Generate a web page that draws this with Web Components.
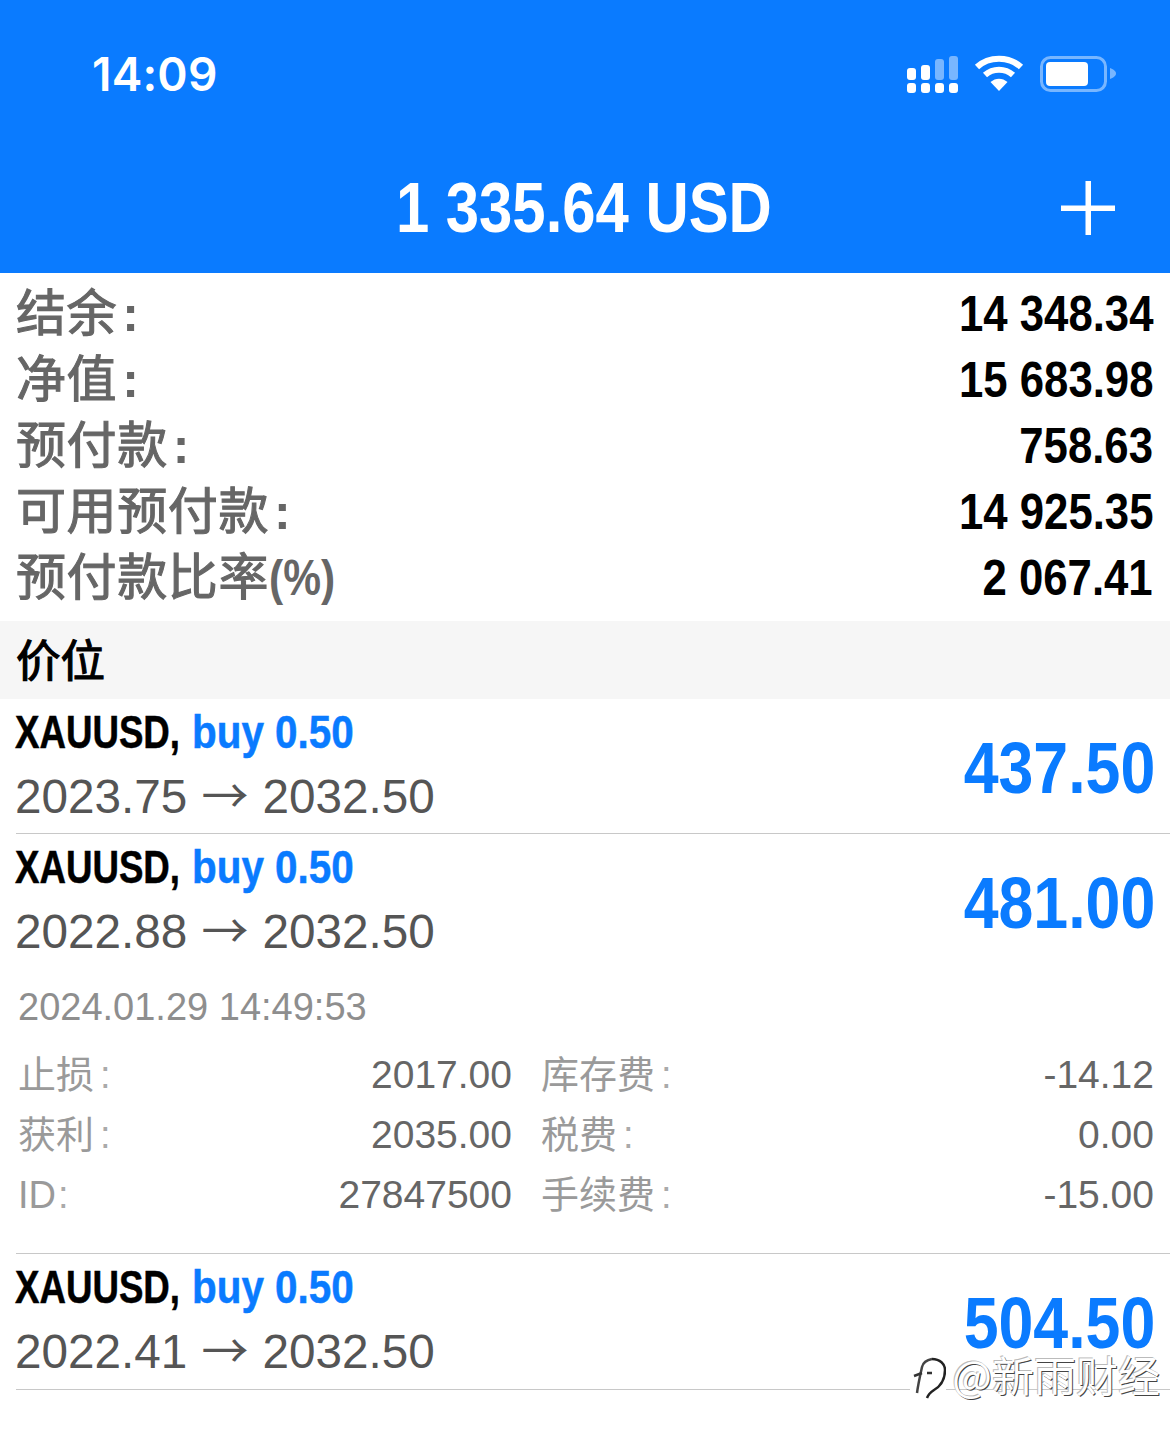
<!DOCTYPE html>
<html lang="zh"><head><meta charset="utf-8"><title>Positions</title>
<style>
html,body{margin:0;background:#fff;width:1170px;height:1439px;overflow:hidden;font-family:"Liberation Sans","Noto Sans CJK SC",sans-serif}
</style></head><body>
<trade-screen>
  <status-bar slot="status" time="14:09"></status-bar>
  <app-header slot="header">1 335.64 USD</app-header>
  <balance-row label="结余" tail=":" value="14 348.34"></balance-row>
  <balance-row label="净值" tail=":" value="15 683.98"></balance-row>
  <balance-row label="预付款" tail=":" value="758.63"></balance-row>
  <balance-row label="可用预付款" tail=":" value="14 925.35"></balance-row>
  <balance-row label="预付款比率" tail="(%)" value="2 067.41"></balance-row>
  <section-head>价位</section-head>
  <position-row open="2023.75" close="2032.50" profit="437.50"></position-row>
  <position-row open="2022.88" close="2032.50" profit="481.00">
    <position-detail></position-detail>
  </position-row>
  <position-row open="2022.41" close="2032.50" profit="504.50"></position-row>
  <water-mark></water-mark>
</trade-screen>
<script>
const SANS='"Liberation Sans","Noto Sans CJK SC",sans-serif';
const CJK='"Noto Sans CJK SC",sans-serif';
function def(name,render){
  customElements.define(name,class extends HTMLElement{
    connectedCallback(){
      if(this.shadowRoot)return;
      this.attachShadow({mode:'open'}).innerHTML=render(this);
    }
  });
}
def('trade-screen',()=>`<style>:host{display:flex;flex-direction:column;position:relative;width:1170px;height:1439px;overflow:hidden;background:#fff}
.top{display:flex;flex-direction:column;background:#0a7bff}</style>
<div class="top"><slot name="status"></slot><slot name="header"></slot></div>
<slot></slot>`);
def('status-bar',el=>`<style>:host{display:flex;align-items:center;justify-content:space-between;height:135px;box-sizing:border-box;padding:12px 53px 0 92px;color:#fff}
.t{font:600 46px Inter,"Liberation Sans",sans-serif;letter-spacing:.2px}
svg{display:block;margin-bottom:1px}</style>
<span class="t">${el.getAttribute('time')}</span>
<svg width="210" height="40" viewBox="0 0 210 40" fill="#fff">
 <g>
  <rect x="0" y="15" width="9" height="12" rx="3"/><rect x="14" y="12" width="9" height="15" rx="3"/>
  <rect x="28" y="6" width="9" height="21" rx="3" opacity=".45"/><rect x="42" y="3" width="9" height="24" rx="3" opacity=".45"/>
  <rect x="0" y="30" width="9" height="10" rx="3"/><rect x="14" y="30" width="9" height="10" rx="3"/><rect x="28" y="30" width="9" height="10" rx="3"/><rect x="42" y="30" width="9" height="10" rx="3"/>
 </g>
 <g fill="none" stroke="#fff" stroke-width="6.200">
  <path d="M70 14C82 3 102 3 114 14"/><path d="M78 22C86 15 98 15 106 22"/>
 </g>
 <path d="M92 38L83.500 29C88.500 24.500 95.500 24.500 100.500 29Z"/>
 <rect x="134.500" y="4.500" width="64" height="33" rx="9" fill="none" stroke="#fff" stroke-opacity=".45" stroke-width="3"/>
 <rect x="139" y="9" width="42" height="24" rx="4"/>
 <path d="M203 15c3 1 6 3 6 5.500s-3 4.500-6 5.500z" opacity=".45"/>
</svg>`);
def('app-header',()=>`<style>:host{display:flex;align-items:center;justify-content:center;position:relative;height:138px;box-sizing:border-box;padding:8px 2px 0 0;color:#fff}
.v{display:inline-block;font:700 70px ${SANS};transform:scaleX(.855);white-space:pre}
svg{position:absolute;right:55px;top:46px}</style>
<span class="v"><slot></slot></span>
<svg width="54" height="54" viewBox="0 0 54 54" fill="#fff"><rect x="0" y="24.500" width="54" height="5.500"/><rect x="24.500" y="0" width="5.500" height="54"/></svg>`);
def('balance-row',el=>{const t=el.getAttribute('tail');return `<style>:host{display:flex;align-items:center;justify-content:space-between;height:66px;padding:0 16px;box-sizing:border-box}
:host(:first-of-type){margin-top:8px}
.l{font:400 50px/66px ${CJK};letter-spacing:.6px;color:#666;-webkit-text-stroke:1.100px #666;margin-bottom:5px;white-space:pre}
.t{display:inline-block;font:700 50px/66px "Liberation Sans",sans-serif;letter-spacing:0;-webkit-text-stroke:0;transform-origin:left;${t===':'?'margin-left:5px':'transform:scaleX(.85)'}}
.v{display:inline-block;font:700 50px/66px ${SANS};color:#000;transform:scaleX(.874);transform-origin:right;white-space:pre;margin-right:1px}</style>
<span class="l">${el.getAttribute('label')}<span class="t">${t}</span></span><span class="v">${el.getAttribute('value')}</span>`});
def('section-head',()=>`<style>:host{display:flex;align-items:center;height:78px;padding:0 16px;background:#f6f6f6;color:#000;box-sizing:border-box;margin-top:10px}
span{font:400 44.500px ${CJK};-webkit-text-stroke:1.200px #000;margin-bottom:6px}</style><span><slot></slot></span>`);
def('position-row',el=>`<style>:host{display:block;margin-left:16px;border-bottom:1px solid #c8c8c8}
:host(:last-of-type){padding-bottom:1px}
.m{display:flex;justify-content:space-between;align-items:center;height:134px;padding-right:15px}
.n{display:flex;font:700 47px/60px ${SANS};color:#000;white-space:pre;margin:-2px 0 2px -1px;width:420px;-webkit-text-stroke:.5px currentColor}
.n span,.n b{display:block;transform-origin:left}
.n span{width:177px;transform:scaleX(.78)}
.n b{color:#0a7bff;transform:scaleX(.86)}
.p{font:400 47.700px/60px "Liberation Sans",sans-serif;color:#555;white-space:pre;margin:-1px 0 1px -1px}
.p i{font:400 47px/60px ${CJK};margin:0 14px}
.a{display:inline-block;font:700 72px ${SANS};color:#0a7bff;transform:scaleX(.87);transform-origin:right;margin-top:4px}</style>
<div class="m"><div><div class="n"><span>XAUUSD,</span><b>buy 0.50</b></div><div class="p">${el.getAttribute('open')}<i>→</i>${el.getAttribute('close')}</div></div>
<span class="a">${el.getAttribute('profit')}</span></div><slot></slot>`);
const cell=(l,v,m=6)=>`<div class="c"><span class="l">${l}<u style="margin-left:${m}px">:</u></span><span class="v">${v}</span></div>`;
def('position-detail',()=>`<style>:host{display:block;padding:9px 16px 28px 2px;color:#8e8e8e;font:400 38px ${SANS}}
.d{height:60px;line-height:60px;margin-bottom:8px}
.g{display:grid;grid-template-columns:494px 1fr;column-gap:29px;grid-auto-rows:60px;line-height:60px;font-size:39px}
.c{display:flex;justify-content:space-between}.v{color:#666}
.l{color:#9a9a9a;font-size:38px}
u{text-decoration:none;color:#aaa}</style>
<div class="d">2024.01.29 14:49:53</div>
<div class="g">${cell('止损','2017.00')}${cell('库存费','-14.12')}${cell('获利','2035.00')}${cell('税费','0.00')}${cell('ID','27847500',2)}${cell('手续费','-15.00')}</div>`);
def('water-mark',()=>`<style>:host{position:absolute;right:10px;top:1346px;display:flex;align-items:center;gap:6px;color:#fff;font:400 42px ${CJK};text-shadow:1px 1px 0 #444,-1px -1px 0 #bbb;line-height:56px}
svg{display:block;background:#fff}</style>
<svg width="36" height="50" viewBox="0 0 36 50" fill="none" stroke="#222" stroke-width="2.500"><path d="M22 10C30 10 35 15 35 21C35 30 31 37 24 41C21 43 18 46 17 49"/><path d="M22 10C16 11 13 14 12 18C10 27 8 36 7 44" stroke="#444"/><path d="M4 27L12 24M17 24H22" stroke="#333"/></svg>
<span>@新雨财经</span>`);
</script>
</body></html>
